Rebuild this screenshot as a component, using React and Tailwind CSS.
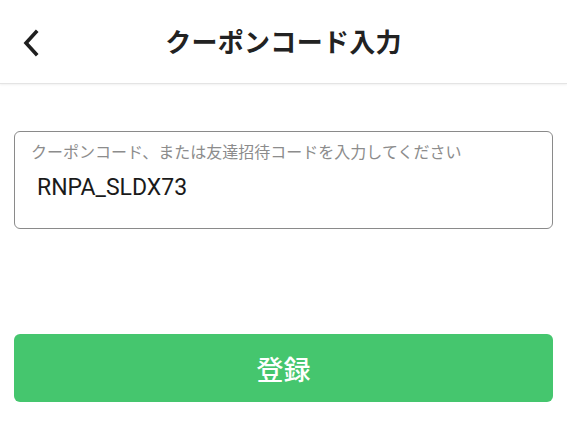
export default function App() {
  const font = { fontFamily: '"Noto Sans CJK JP", "Noto Sans", sans-serif' };
  return (
    <div className="w-[567px] h-[425px] bg-white overflow-hidden" style={font}>
      <header className="relative h-[84px] flex items-center justify-center border-b border-[#e4e4e4] shadow-[0_1px_2px_rgba(0,0,0,0.06)]">
        <button className="absolute left-[20px] top-[28px] w-[22px] h-[30px] flex items-center justify-center">
          <svg width="18" height="28" viewBox="0 0 18 28" fill="none">
            <path d="M14 3 L4 14 L14 25" stroke="#1f1f1f" strokeWidth="3.6" strokeLinecap="square" strokeLinejoin="miter" />
          </svg>
        </button>
        <h1 className="text-[26px] font-bold text-[#222] leading-none tracking-[0.3px] mt-[-2px]">クーポンコード入力</h1>
      </header>
      <div className="px-[14px] pt-[47px]">
        <div className="h-[98px] rounded-[6px] border-[1.5px] border-[#8a8a8a] pl-[16px] pt-[8px]">
          <div className="text-[16px] text-[#8c8c8c] leading-[22px]">クーポンコード、または友達招待コードを入力してください</div>
          <div className="mt-[11px] pl-[6px] text-[23px] text-[#1a1a1a] leading-[30px]" style={{ fontFamily: 'Roboto, "Noto Sans", sans-serif' }}>RNPA_SLDX73</div>
        </div>
        <button className="mt-[105px] w-full h-[68px] rounded-[6px] bg-[#45c66e] flex items-center justify-center text-white text-[27px] font-medium leading-none">
          登録
        </button>
      </div>
    </div>
  );
}
